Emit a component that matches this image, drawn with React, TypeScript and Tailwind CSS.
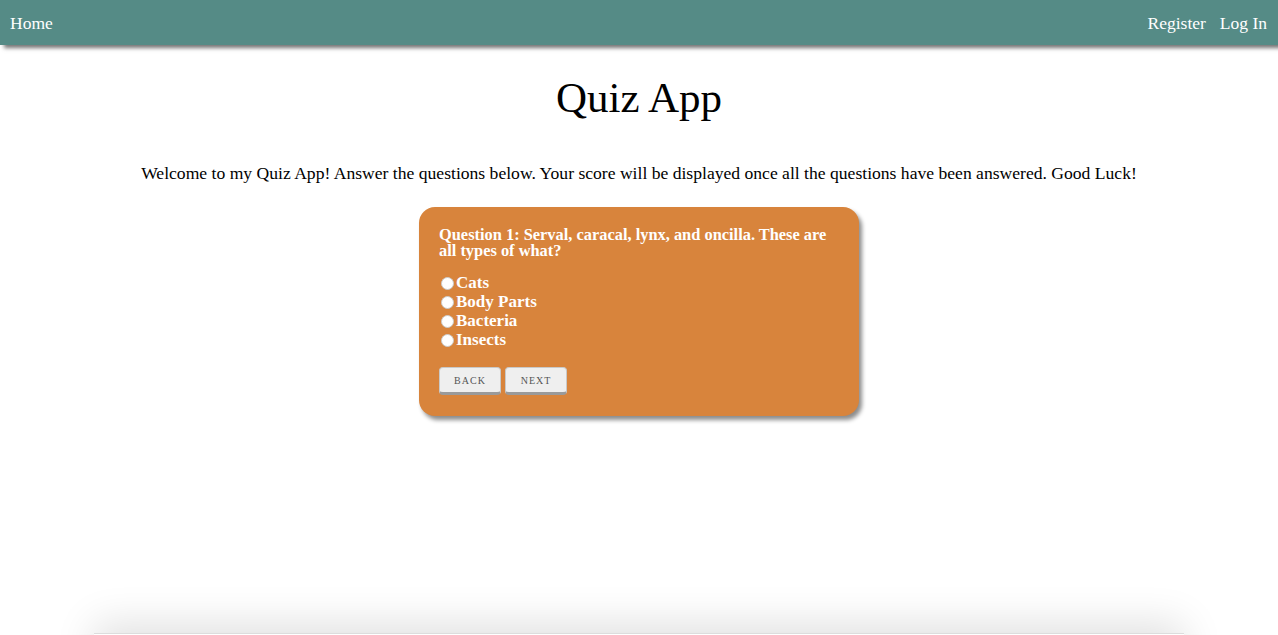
import { useState } from "react";

const options = ["Cats", "Body Parts", "Bacteria", "Insects"];

export default function App() {
  const [answer, setAnswer] = useState("");

  return (
    <div className="min-h-screen bg-white font-['Liberation_Serif',serif] text-black">
      {/* Barra de navegação */}
      <nav className="flex h-[45px] items-center justify-between bg-[#558b86] px-[10px] text-[17.5px] text-white shadow-[4px_3px_4px_rgba(0,0,0,0.55)]">
        <a className="pt-[1px]">Home</a>
        <div className="flex gap-[14px] pr-[1px] pt-[1px]">
          <a>Register</a>
          <a>Log In</a>
        </div>
      </nav>

      <main className="flex h-[588px] flex-col items-center">
        <h1 className="mt-[28px] text-[43px] leading-[50px]">Quiz App</h1>
        <p className="mt-[39px] text-[17.6px] leading-[22px]">
          Welcome to my Quiz App! Answer the questions below. Your score will be displayed once all the
          questions have been answered. Good Luck!
        </p>

        {/* Cartão da pergunta */}
        <div className="mt-[23px] w-[440px] rounded-[16px] bg-[#d8843c] px-[20px] pb-[21px] pt-[20px] text-white shadow-[3px_4px_4px_rgba(0,0,0,0.45)]">
          <h3 className="text-[16.4px] font-bold leading-[16px]">
            Question 1: Serval, caracal, lynx, and oncilla. These are all types of what?
          </h3>
          <div className="mt-[14px] flex flex-col">
            {options.map((o) => (
              <label key={o} className="flex h-[19px] items-center text-[17px] font-bold leading-[19px]">
                <input
                  type="radio"
                  name="q1"
                  checked={answer === o}
                  onChange={() => setAnswer(o)}
                  className="mx-[2px] mt-[2px] h-[13px] w-[13px] appearance-none rounded-full border border-[#ccc] bg-white"
                />
                {o}
              </label>
            ))}
          </div>
          <div className="mt-[18px] flex gap-[4px]">
            <button className="h-[28px] w-[62px] rounded-[4px] border border-[#c9c9c9] border-b-[3px] border-b-[#9a9a9a] bg-[#efefef] text-[10px] tracking-[1px] text-[#555]">
              BACK
            </button>
            <button className="h-[28px] w-[62px] rounded-[4px] border border-[#c9c9c9] border-b-[3px] border-b-[#9a9a9a] bg-[#efefef] text-[10px] tracking-[1px] text-[#555]">
              NEXT
            </button>
          </div>
        </div>
      </main>

      <footer className="mx-auto h-[80px] w-[1090px] border-t border-[#ddd] bg-white shadow-[0_-10px_40px_rgba(0,0,0,0.12)]" />
    </div>
  );
}
